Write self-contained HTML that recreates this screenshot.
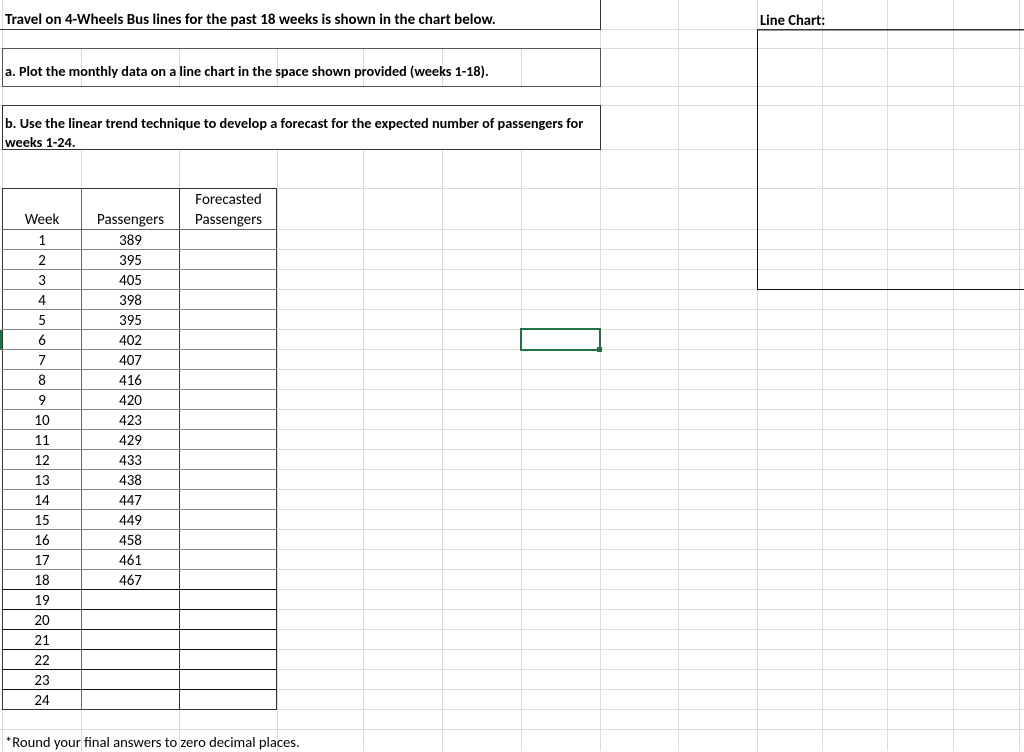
<!DOCTYPE html>
<html><head><meta charset="utf-8"><style>
body{margin:0;width:1024px;height:751px;overflow:hidden;background:#fff;position:relative;font-family:Calibri,Carlito,"Liberation Sans",sans-serif;}
.t{position:absolute;font-size:15px;line-height:20px;color:#000;white-space:nowrap;}
.b{font-weight:bold;font-size:14.6px;}
.c{text-align:center;}
</style></head><body>
<svg width="1024" height="751" style="position:absolute;left:0;top:0" xmlns="http://www.w3.org/2000/svg">
<g stroke="#dadada" stroke-width="1" shape-rendering="crispEdges">
<line x1="2.5" y1="0" x2="2.5" y2="751"/>
<line x1="81.5" y1="29" x2="81.5" y2="105"/><line x1="179.5" y1="29" x2="179.5" y2="105"/><line x1="277.5" y1="29" x2="277.5" y2="105"/>
<line x1="81.5" y1="149" x2="81.5" y2="751"/><line x1="179.5" y1="149" x2="179.5" y2="751"/><line x1="277.5" y1="149" x2="277.5" y2="751"/>
<line x1="363.5" y1="29" x2="363.5" y2="105"/><line x1="442.5" y1="29" x2="442.5" y2="105"/><line x1="521.5" y1="29" x2="521.5" y2="105"/>
<line x1="363.5" y1="149" x2="363.5" y2="751"/><line x1="442.5" y1="149" x2="442.5" y2="751"/><line x1="521.5" y1="149" x2="521.5" y2="751"/>
<line x1="600.5" y1="0" x2="600.5" y2="751"/><line x1="678.5" y1="0" x2="678.5" y2="751"/><line x1="757.5" y1="0" x2="757.5" y2="751"/>
<line x1="822.5" y1="0" x2="822.5" y2="751"/><line x1="887.5" y1="0" x2="887.5" y2="751"/><line x1="953.5" y1="0" x2="953.5" y2="751"/><line x1="1019.5" y1="0" x2="1019.5" y2="751"/>
<line x1="0" y1="29.5" x2="1024" y2="29.5"/><line x1="0" y1="48.5" x2="1024" y2="48.5"/><line x1="0" y1="86.5" x2="1024" y2="86.5"/>
<line x1="0" y1="105.5" x2="1024" y2="105.5"/><line x1="0" y1="149.5" x2="1024" y2="149.5"/><line x1="0" y1="188.5" x2="1024" y2="188.5"/>
<line x1="0" y1="229.5" x2="1024" y2="229.5"/>
<line x1="0" y1="249.5" x2="1024" y2="249.5"/><line x1="0" y1="269.5" x2="1024" y2="269.5"/><line x1="0" y1="289.5" x2="1024" y2="289.5"/><line x1="0" y1="309.5" x2="1024" y2="309.5"/><line x1="0" y1="329.5" x2="1024" y2="329.5"/><line x1="0" y1="349.5" x2="1024" y2="349.5"/><line x1="0" y1="369.5" x2="1024" y2="369.5"/><line x1="0" y1="389.5" x2="1024" y2="389.5"/><line x1="0" y1="409.5" x2="1024" y2="409.5"/><line x1="0" y1="429.5" x2="1024" y2="429.5"/><line x1="0" y1="449.5" x2="1024" y2="449.5"/><line x1="0" y1="469.5" x2="1024" y2="469.5"/><line x1="0" y1="489.5" x2="1024" y2="489.5"/><line x1="0" y1="509.5" x2="1024" y2="509.5"/><line x1="0" y1="529.5" x2="1024" y2="529.5"/><line x1="0" y1="549.5" x2="1024" y2="549.5"/><line x1="0" y1="569.5" x2="1024" y2="569.5"/><line x1="0" y1="589.5" x2="1024" y2="589.5"/><line x1="0" y1="609.5" x2="1024" y2="609.5"/><line x1="0" y1="629.5" x2="1024" y2="629.5"/><line x1="0" y1="649.5" x2="1024" y2="649.5"/><line x1="0" y1="669.5" x2="1024" y2="669.5"/><line x1="0" y1="689.5" x2="1024" y2="689.5"/><line x1="0" y1="709.5" x2="1024" y2="709.5"/><line x1="0" y1="729.5" x2="1024" y2="729.5"/>
</g>
<rect x="3" y="30" width="597" height="18" fill="#fff"/>
<rect x="3" y="87" width="597" height="18" fill="#fff"/>
<g stroke="#333" stroke-width="1" fill="none" shape-rendering="crispEdges">
<line x1="600.5" y1="0" x2="600.5" y2="29"/>
<line x1="0" y1="29.5" x2="601" y2="29.5"/>
<rect x="2.5" y="48.5" width="598" height="38" stroke="#555"/>
<rect x="2.5" y="105.5" width="598" height="44"/>
<rect x="757.5" y="29.5" width="280" height="260" stroke="#111"/>
<line x1="757" y1="29.5" x2="1024" y2="29.5" stroke-width="1.5"/>
<rect x="2.5" y="188.5" width="274" height="521"/>
<line x1="81.5" y1="188" x2="81.5" y2="710" stroke="#666"/>
<line x1="179.5" y1="188" x2="179.5" y2="710"/>
<line x1="2" y1="229.5" x2="277" y2="229.5" stroke="#666"/>
</g>
<g stroke="#888" stroke-width="1" shape-rendering="crispEdges">
<line x1="2" y1="249.5" x2="277" y2="249.5"/><line x1="2" y1="269.5" x2="277" y2="269.5"/><line x1="2" y1="289.5" x2="277" y2="289.5"/><line x1="2" y1="309.5" x2="277" y2="309.5"/><line x1="2" y1="329.5" x2="277" y2="329.5"/><line x1="2" y1="349.5" x2="277" y2="349.5"/><line x1="2" y1="369.5" x2="277" y2="369.5"/><line x1="2" y1="389.5" x2="277" y2="389.5"/><line x1="2" y1="409.5" x2="277" y2="409.5"/><line x1="2" y1="429.5" x2="277" y2="429.5"/><line x1="2" y1="449.5" x2="277" y2="449.5"/><line x1="2" y1="469.5" x2="277" y2="469.5"/><line x1="2" y1="489.5" x2="277" y2="489.5"/><line x1="2" y1="509.5" x2="277" y2="509.5"/><line x1="2" y1="529.5" x2="277" y2="529.5"/><line x1="2" y1="549.5" x2="277" y2="549.5"/><line x1="2" y1="569.5" x2="277" y2="569.5"/>
</g>
<g stroke="#111" stroke-width="1" shape-rendering="crispEdges">
<line x1="2" y1="589.5" x2="277" y2="589.5"/><line x1="2" y1="609.5" x2="277" y2="609.5"/><line x1="2" y1="629.5" x2="277" y2="629.5"/><line x1="2" y1="649.5" x2="277" y2="649.5"/><line x1="2" y1="669.5" x2="277" y2="669.5"/><line x1="2" y1="689.5" x2="277" y2="689.5"/>
</g>
<rect x="521" y="329" width="79" height="21" fill="none" stroke="#217346" stroke-width="2"/>
<rect x="597" y="347" width="5" height="5" fill="#217346"/>
<rect x="0" y="330" width="2" height="20" fill="#217346"/>
</svg>
<div class="t b" style="left:5px;top:10px;font-size:15px">Travel on 4-Wheels Bus lines for the past 18 weeks is shown in the chart below.</div>
<div class="t b" style="left:760px;top:10px">Line Chart:</div>
<div class="t b" style="left:5px;top:61px;font-size:14.2px">a. Plot the monthly data on a line chart in the space shown provided (weeks 1-18).</div>
<div class="t b" style="left:5px;top:113px;font-size:14.3px">b. Use the linear trend technique to develop a forecast for the expected number of passengers for</div>
<div class="t b" style="left:5px;top:132px;font-size:14.3px">weeks 1-24.</div>
<div class="t c" style="left:3px;width:78px;top:210px">Week</div>
<div class="t c" style="left:82px;width:97px;top:210px">Passengers</div>
<div class="t c" style="left:180px;width:97px;top:190px">Forecasted</div>
<div class="t c" style="left:180px;width:97px;top:210px">Passengers</div>
<div id="rows"></div>
<div class="t" style="left:5px;top:732px;font-size:14.6px">*Round your final answers to zero decimal places.</div>
<script>
var p=[389,395,405,398,395,402,407,416,420,423,429,433,438,447,449,458,461,467];
var h='';
for(var i=0;i<24;i++){var y=231+i*20;
h+='<div class="t c" style="left:3px;width:78px;top:'+y+'px">'+(i+1)+'</div>';
if(i<18)h+='<div class="t c" style="left:82px;width:97px;top:'+y+'px">'+p[i]+'</div>';}
document.getElementById('rows').innerHTML=h;
</script>
</body></html>
